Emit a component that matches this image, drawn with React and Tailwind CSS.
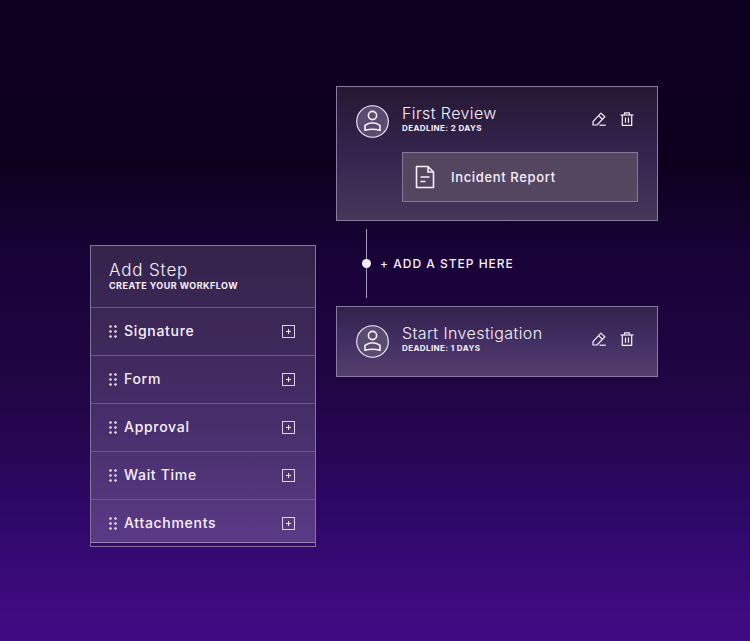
// ─── Icons ───────────────────────────────────────────────────────────────────

const UserIcon = () => (
  <svg width="33" height="33" viewBox="0 0 33 33" fill="none" stroke="currentColor" strokeWidth="1.6">
    <circle cx="16.5" cy="16.5" r="15.8" fill="#5a4b70" strokeWidth="1.1" />
    <circle cx="16.5" cy="10.500" r="4.100" />
    <path d="M9 25.300v-4.900c2.300-1.800 4.800-2.700 7.500-2.700s5.200.9 7.500 2.700v4.900c-2.400-.7-4.900-1.100-7.500-1.100s-5.100.4-7.500 1.100z" strokeLinejoin="miter" />
  </svg>
);

const DocumentIcon = () => (
  <svg width="20" height="24" viewBox="0 0 20 24" fill="none" stroke="currentColor" strokeWidth="1.6">
    <path d="M1.500 1.500h11.500l5.500 5.500v15.500h-17z" strokeLinejoin="round" />
    <path d="M13 1.500v5.500h5.500" />
    <path d="M5.500 12h9M5.500 16.500h5" />
  </svg>
);

const PencilIcon = () => (
  <svg width="14" height="14" viewBox="0 0 14 14" fill="none" stroke="currentColor" strokeWidth="1.2">
    <path d="M1 13V9.600L8.900 1.100l3.900 3.700L5 13z" strokeLinejoin="round" />
    <path d="M6.600 3.600l3.800 3.700" />
    <path d="M7.500 13.200h6.300" />
  </svg>
);

const TrashIcon = () => (
  <svg width="14" height="14" viewBox="0 0 14 14" fill="none" stroke="currentColor" strokeWidth="1.2">
    <path d="M.6 3h12.800" />
    <path d="M4.100 3l.6-2.200h4.600l.6 2.200" />
    <path d="M2.300 3v10.400h9.400V3" />
    <path d="M5.500 5.500v5.200M8.500 5.500v5.200" />
  </svg>
);

const DragIcon = () => (
  <svg width="8" height="13" viewBox="0 0 8 13" fill="currentColor">
    <circle cx="1.500" cy="1.500" r="1.200" />
    <circle cx="6.500" cy="1.500" r="1.200" />
    <circle cx="1.500" cy="6.500" r="1.200" />
    <circle cx="6.500" cy="6.500" r="1.200" />
    <circle cx="1.500" cy="11.500" r="1.200" />
    <circle cx="6.500" cy="11.500" r="1.200" />
  </svg>
);

const PlusBoxIcon = () => (
  <svg width="13" height="13" viewBox="0 0 13 13" fill="none" stroke="currentColor">
    <rect x=".5" y=".5" width="12" height="12" strokeOpacity=".85" />
    <path d="M6.500 4v5M4 6.500h5" />
  </svg>
);

// ─── Data ────────────────────────────────────────────────────────────────────

const stepTypes = ['Signature', 'Form', 'Approval', 'Wait Time', 'Attachments'];

// ─── Components ──────────────────────────────────────────────────────────────

const AddStepPanel = () => (
  <aside className="mt-[159px] border border-[#84749b] pb-[3px]">
    <div className="border-b border-[#9a83b8] bg-linear-to-b from-[#35234a] via-[#432c64] to-[#5a3a86]">
      <header className="px-[18px] pt-[14px] pb-[15px]">
        <h2 className="text-[17px] leading-5 font-light tracking-wider">Add Step</h2>
        <p className="text-[9px] leading-3 font-bold tracking-wider uppercase">Create your workflow</p>
      </header>
      <ul>
        {stepTypes.map((name) => (
          <li
            key={name}
            className="flex items-center justify-between border-t border-[#6b568a] pt-[11px] pr-5 pb-3 pl-[18px] last:pb-[7px]"
          >
            <span className="flex items-center gap-[7px] text-sm leading-6 font-medium tracking-wider">
              <DragIcon />
              {name}
            </span>
            <button type="button" aria-label={`Add ${name}`}>
              <PlusBoxIcon />
            </button>
          </li>
        ))}
      </ul>
    </div>
  </aside>
);

const StepCard = ({ title, days, className, children }) => (
  <section className={`border border-[#8b7ba2] px-[19px] py-[18px] ${className}`}>
    <div className="flex items-start gap-[13px]">
      <UserIcon />
      <div className="flex-1">
        <h3 className="text-base leading-[17px] font-light tracking-wide">{title}</h3>
        <p className="text-[8px] leading-[13px] font-bold tracking-wider uppercase">Deadline: {days} days</p>
      </div>
      <div className="flex gap-[14px] pt-[7px] pr-1">
        <button type="button" aria-label={`Edit ${title}`}>
          <PencilIcon />
        </button>
        <button type="button" aria-label={`Delete ${title}`}>
          <TrashIcon />
        </button>
      </div>
    </div>
    {children}
  </section>
);

const StepConnector = () => (
  <div className="my-2 ml-[26px] flex items-center gap-[9px]">
    <div className="flex flex-col items-center">
      <span className="h-[30px] w-px bg-[#a99bc0]" />
      <span className="size-[9px] rounded-full bg-[#f8f0ff]" />
      <span className="h-[30px] w-px bg-[#a99bc0]" />
    </div>
    <button type="button" className="text-xs leading-4 font-medium tracking-[1px] uppercase">
      + Add a step here
    </button>
  </div>
);

const App = () => (
  <main className="min-h-screen bg-[linear-gradient(to_bottom,#0e0022,#0d001e_25%,#19033a_42%,#1e053f_55%,#25064f_68%,#2e0868_80%,#400b82_97%)] pt-[86px] pr-[92px] pb-10 pl-[90px] font-['Inter',sans-serif] text-[#f8f0ff]">
    <div className="grid grid-cols-[113fr_161fr] items-start gap-5">
      <AddStepPanel />
      <div>
        <StepCard title="First Review" days={2} className="bg-linear-to-b from-[#261833] via-[#34244f] to-[#453859]">
          <div className="mt-[14px] ml-[46px] flex items-center gap-4 border border-[#84779a] bg-[#54465f] px-3 py-3">
            <DocumentIcon />
            <span className="text-[13px] leading-6 font-medium tracking-wider">Incident Report</span>
          </div>
        </StepCard>
        <StepConnector />
        <StepCard
          title="Start Investigation"
          days={1}
          className="bg-linear-to-b from-[#33214d] via-[#432f63] to-[#543e6c]"
        />
      </div>
    </div>
  </main>
);

export default App;
